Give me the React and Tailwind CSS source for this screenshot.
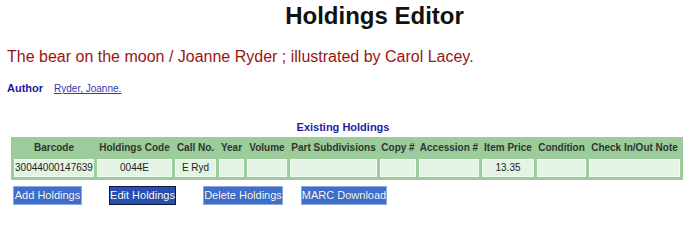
import React from "react";

const cols = [
  { h: "Barcode", w: "w-[80px]", v: "30044000147639" },
  { h: "Holdings Code", w: "w-[75px]", v: "0044E" },
  { h: "Call No.", w: "w-[41px]", v: "E Ryd" },
  { h: "Year", w: "w-[25px]", v: "" },
  { h: "Volume", w: "w-[40px]", v: "" },
  { h: "Part Subdivisions", w: "w-[87px]", v: "" },
  { h: "Copy #", w: "w-[36px]", v: "" },
  { h: "Accession #", w: "w-[60px]", v: "" },
  { h: "Item Price", w: "w-[52px]", v: "13.35" },
  { h: "Condition", w: "w-[49px]", v: "" },
  { h: "Check In/Out Note", w: "w-[91px]", v: "" },
];

function Btn({ children, dark, className }) {
  return (
    <div
      className={
        "h-[19px] flex items-center justify-center whitespace-nowrap text-[11px] leading-none text-white border " +
        (dark
          ? "bg-[#2451b2] border-[#15183a] "
          : "bg-[#3f6fcc] border-[#8fa9d6] ") +
        className
      }
      style={{ textShadow: "0 0 1px rgba(20,30,80,0.6)" }}
    >
      {children}
    </div>
  );
}

export default function App() {
  return (
    <div
      className="w-[700px] h-[215px] bg-white overflow-hidden pl-[7px]"
      style={{ fontFamily: '"Liberation Sans", Arial, sans-serif' }}
    >
      <div className="pt-[2px] pl-[42px] text-center text-[24px] leading-[28px] font-bold text-[#111]">
        Holdings Editor
      </div>
      <div className="mt-[18px] text-[16px] leading-[18px] text-[#9a1414] whitespace-nowrap">
        The bear on the moon / Joanne Ryder ; illustrated by Carol Lacey.
      </div>
      <div className="mt-[16px] flex items-baseline h-[13px] leading-[13px]">
        <span className="text-[11px] font-bold text-[#1c1c9c]">Author</span>
        <span className="ml-[11px] text-[10px] text-[#3535b0] underline">Ryder, Joanne.</span>
      </div>
      <div className="mt-[26px] w-[672px] ml-[4px] text-center pr-[8px] text-[11px] leading-[13px] font-bold text-[#1e1ea0]">
        Existing Holdings
      </div>
      <div className="mt-[3px] ml-[4px] w-[672px] bg-[#9ccc9c] p-[3px] flex flex-col gap-[3px]">
        <div className="flex gap-[3px]">
          {cols.map((c) => (
            <div
              key={c.h}
              className={c.w + " h-[16px] text-center text-[10px] leading-[16px] font-bold text-[#2e362e] whitespace-nowrap"}
            >
              {c.h}
            </div>
          ))}
        </div>
        <div className="flex gap-[3px]">
          {cols.map((c) => (
            <div
              key={c.h}
              className={c.w + " h-[18px] bg-[#e4f4e4] border border-[#f2fbf2] text-center text-[10px] leading-[16px] text-[#222] whitespace-nowrap overflow-hidden"}
            >
              {c.v}
            </div>
          ))}
        </div>
      </div>
      <div className="mt-[6px] flex">
        <Btn className="ml-[6px] w-[69px]">Add Holdings</Btn>
        <Btn dark className="ml-[27px] w-[67px]">Edit Holdings</Btn>
        <Btn className="ml-[27px] w-[80px]">Delete Holdings</Btn>
        <Btn className="ml-[18px] w-[86px]">MARC Download</Btn>
      </div>
    </div>
  );
}
